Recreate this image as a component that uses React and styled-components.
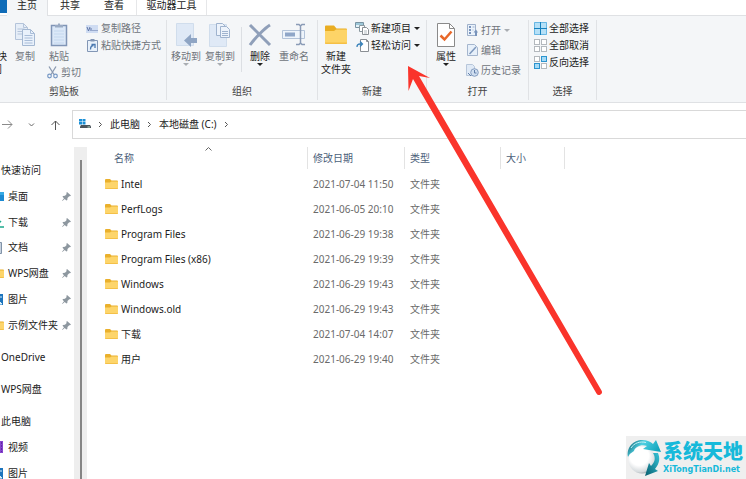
import React from "react";
import styled, { createGlobalStyle, css } from "styled-components";

const Global = createGlobalStyle`
  *, *::before, *::after { box-sizing: border-box; }
  body { margin: 0; background: #fff; }
  button, a, table { font: inherit; color: inherit; }
  button { border: 0; padding: 0; margin: 0; background: none; }
  a { text-decoration: none; }
  ul, ol { list-style: none; margin: 0; padding: 0; }
  svg { display: block; flex: none; }
`;

const Window = styled.div`
  position: relative;
  display: flex;
  flex-direction: column;
  height: 100vh;
  overflow: hidden;
  background: #fff;
  color: #222;
  font: 10px/13px "Noto Sans", "Noto Sans CJK SC", sans-serif;
  white-space: nowrap;
`;

/* ---------- tabs ---------- */
const TabStrip = styled.nav`
  display: flex;
  align-items: flex-start;
  flex: none;
  height: 15px;
  line-height: 10px;
`;
const FileTab = styled.button`
  width: 7px;
  height: 13px;
  background: #0f6cb8;
`;
const Tab = styled.button`
  width: 44px;
  height: 15px;
  padding-bottom: 5px;
  ${(p) => p.$active && css`
    width: 41px;
    height: 16px;
    padding-bottom: 6px;
    position: relative;
    background: #f4f6f8;
    border-right: 1px solid #dfe1e4;
  `}
  ${(p) => p.$context && css`
    width: 71px;
    border: solid #e6e7e9;
    border-width: 0 1px;
  `}
`;

/* ---------- ribbon ---------- */
const Ribbon = styled.div`
  display: flex;
  flex: none;
  height: 88px;
  padding: 4px 0 2px;
  background: #f4f6f8;
  border: solid #dfe1e4;
  border-width: 1px 0;
`;
const Group = styled.section`
  display: flex;
  flex-direction: column;
  flex: none;
  width: ${(p) => p.$width}px;
  margin-left: ${(p) => (p.$clipped ? -38 : 0)}px;
  border-right: 1px solid #e0e2e5;
`;
const GroupBody = styled.div`
  display: flex;
  align-items: flex-start;
  height: 64px;
  padding-left: ${(p) => p.$inset}px;
`;
const GroupName = styled.div`
  height: 17px;
  line-height: 17px;
  text-align: center;
  color: #444;
`;
const BigButton = styled.button`
  display: flex;
  flex-direction: column;
  align-items: center;
  flex: none;
  width: ${(p) => (p.$wide ? 42 : 34)}px;
  color: ${(p) => (p.disabled ? "#6f747b" : "#222")};
`;
const BigIcon = styled.span`
  display: flex;
  align-items: center;
  justify-content: center;
  height: 30px;
`;
const Stack = styled.div`
  display: flex;
  flex-direction: column;
  align-items: flex-start;
  margin-left: ${(p) => p.$gap || 0}px;
`;
const PasteStack = styled(Stack)`
  width: 38px;
  & > :last-child { margin: 1px 0 0 3px; }
`;
const SmallButton = styled.button`
  display: flex;
  align-items: center;
  gap: 2px;
  height: ${(p) => (p.$tall ? 20 : 17)}px;
  color: ${(p) => (p.disabled ? "#6f747b" : "#222")};
`;
const SmallIcon = styled.span`
  display: flex;
  justify-content: center;
  width: 14px;
`;
const Caret = styled.span`
  flex: none;
  width: 0;
  height: 0;
  margin-left: ${(p) => (p.$inline ? 1 : 0)}px;
  border: solid transparent;
  border-width: 3px 3px 0;
  border-top-color: ${(p) => (p.$dim ? "#a9adb2" : "#222")};
`;
const Separator = styled.div`
  width: 1px;
  height: 45px;
  margin: 7px 1px 0 4px;
  background: #dcdfe3;
`;

/* ---------- address bar ---------- */
const NavBar = styled.div`
  display: flex;
  flex: none;
  align-items: center;
  padding-top: 7px;
`;
const NavButtons = styled.div`
  display: flex;
  align-items: center;
  flex: none;
  width: 72px;
`;
const NavButton = styled.button`
  display: flex;
  align-items: center;
  justify-content: center;
  width: ${(p) => (p.$edge ? 19 : 24)}px;
  padding-right: ${(p) => (p.$edge ? 5 : 0)}px;
  height: 24px;
`;
const Address = styled.ol`
  display: flex;
  flex: 1;
  align-items: center;
  height: 29px;
  padding-left: 6px;
  border: solid #d9d9d9;
  border-width: 1px 0 1px 1px;
`;
const Crumb = styled.li`
  display: flex;
  align-items: center;
  gap: 7px;
  margin-right: 7px;
`;

/* ---------- content ---------- */
const Content = styled.main`
  display: flex;
  flex: 1;
  min-height: 0;
`;
const Sidebar = styled.nav`
  flex: none;
  width: 74px;
  padding-top: 19px;
  overflow: hidden;
`;
const QuickList = styled.ul`
  display: grid;
  grid-template-rows: repeat(7, 1fr);
  height: 180px;
`;
const SideItem = styled.li`
  display: flex;
  align-items: center;
  min-height: ${(p) => (p.$root ? 26 : 0)}px;
  margin-top: ${(p) => (p.$root ? 6 : 0)}px;
  padding: 0 3px 0 1px;
  ${(p) => p.$child && css`
    height: ${p.$fixed ? "26px" : "auto"};
    padding-left: 0;
    margin-left: -9px;
  `}
`;
const SideLink = styled.a`
  display: flex;
  align-items: center;
  flex: 1;
  gap: 4px;
  color: #1c1c1c;
`;
const ScrollTrack = styled.div`
  flex: none;
  width: 13px;
  margin-top: 8px;
  padding: 13px 0 0 6px;
  background: #eeeeee;
`;
const ScrollThumb = styled.div`
  width: 2px;
  height: 100%;
  background: #858585;
`;
const Files = styled.table`
  align-self: flex-start;
  flex: none;
  table-layout: fixed;
  width: 478px;
  margin-top: 8px;
  border-collapse: collapse;
  td { height: 25px; padding: 0 0 0 5px; color: #6a6a6a; }
`;
const HeadCell = styled.th`
  position: relative;
  width: ${(p) => p.$width}px;
  height: 25px;
  padding: 0;
  vertical-align: top;
  font-weight: 400;
  text-align: left;
  color: #4c607a;
`;
const HeadLabel = styled.div`
  height: 22px;
  line-height: 22px;
  padding-left: ${(p) => (p.$first ? 27 : 5)}px;
  border-right: 1px solid #e3e3e3;
`;
const SortMark = styled.span`
  position: absolute;
  top: 0;
  right: 96px;
`;
const FileName = styled.a`
  display: flex;
  align-items: center;
  gap: 3px;
  padding-left: 13px;
  color: #1c1c1c;
`;

/* ---------- overlays ---------- */
const Pointer = styled.svg`
  position: absolute;
  top: 64px;
  left: 406px;
  pointer-events: none;
`;
const Badge = styled.aside`
  position: absolute;
  right: 0;
  bottom: 0;
  display: flex;
  align-items: center;
  width: 120px;
  height: 43px;
  gap: 1px;
  background: #efefef;
  color: #16b9da;
`;
const BadgeTitle = styled.div`
  font: 900 20px/24px "Noto Sans CJK SC", sans-serif;
`;
const BadgeSite = styled.div`
  font: 700 8px/13px "DejaVu Sans", sans-serif;
`;

/* ---------- icons ---------- */
const S = ({ w, h, children, ...rest }) => (
  <svg width={w} height={h} viewBox={`0 0 ${w} ${h}`} fill="none" aria-hidden="true" {...rest}>
    {children}
  </svg>
);

const CopyIcon = () => (
  <S w={21} h={24}>
    <path d="M.5.5h8l4 4v12H.5z" fill="#e6eef8" stroke="#b4c4da" />
    <path d="M8.5.5v4h4M2.500 6h7M2.500 8.500h7M2.500 11h7" stroke="#b4c4da" />
    <path d="M7.500 6.500h8l4 4v12h-12z" fill="#e9f1fb" stroke="#a4b8d2" />
    <path d="M15.500 6.500v4h4M9.500 12.500h8M9.500 15h8M9.500 17.500h8M9.500 20h8" stroke="#a9bdd8" />
  </S>
);
const PasteIcon = () => (
  <S w={18} h={24}>
    <rect x="1.500" y="2.500" width="15" height="20" fill="#dbe8f8" stroke="#8095b6" strokeWidth="1.500" />
    <path d="M5 4.500V2h3V.5h2V2h3v2.500z" fill="#9aabc4" />
    <path d="M4 8h10M4 11h10M4 14h10M4 17h10M4 20h10" stroke="#c4d7ee" />
  </S>
);
const MoveIcon = () => (
  <S w={23} h={24}>
    <path d="M1.500.5h17v22h-17z" fill="#dfe9f6" stroke="#d0ddec" />
    <path d="M9 17.500l7-6.500v4h6v5h-6v4z" fill="#8fa5c4" />
  </S>
);
const CopyToIcon = () => (
  <S w={22} h={24}>
    <path d="M.5 1.500h17v22H.5z" fill="#dfe9f6" stroke="#d0ddec" />
    <path d="M7.500.5h6l3 3v9h-9z" fill="#edf3fb" stroke="#9fb3ce" />
    <path d="M11.500 3.500h6l3 3v8h-9z" fill="#edf3fb" stroke="#9fb3ce" />
    <path d="M13 8.500h6M13 10.500h6M13 12.500h6" stroke="#9fb3ce" />
  </S>
);
const DeleteIcon = () => (
  <S w={24} h={24}>
    <path d="M2 2c4 4 12 12 20 20M22 2C17 5 7 15 2 22" stroke="#8f9fb9" strokeWidth="3" />
  </S>
);
const RenameIcon = () => (
  <S w={24} h={24}>
    <path d="M.5 7.500h22v8H.5z" fill="#eef4fb" stroke="#b3c3d9" />
    <path d="M3 9.500h10v4H3z" fill="#8fa6c8" />
    <path d="M14 1.500h3l1.500 1.500L20 1.500h3M14 21.500h3l1.500-1.500 1.500 1.500h3M18.500 3v17" stroke="#8a9bb6" strokeWidth="1.500" />
  </S>
);
const NewFolderIcon = () => (
  <S w={24} h={22}>
    <path d="M1 2.500Q1 1.500 2 1.500h8l2.500 3H22q1 0 1 1V11H1z" fill="#e9ad22" />
    <path d="M1 7h9l2-1.500h11V19q0 1-1 1H2q-1 0-1-1z" fill="#fdd467" />
    <path d="M1 18.500h22V19q0 1-1 1H2q-1 0-1-1z" fill="#f5bf45" />
  </S>
);
const PropertiesIcon = () => (
  <S w={18} h={24}>
    <path d="M.5.5h12l5 5v18H.5z" fill="#fff" stroke="#8a8a8a" />
    <path d="M12.500.5v5h5" stroke="#8a8a8a" />
    <path d="M3.500 12.500l4 4 7-8" stroke="#e8682a" strokeWidth="2.500" />
  </S>
);
const PathIcon = () => (
  <S w={12} h={8}>
    <path d="M0 0h12v8H0z" fill="#cfdcf2" />
    <path d="M1 2l1.500 4L4 2M5 3v3M6.500 5.500h1M8.500 5.500h1M10.500 5.500h1" stroke="#6077a8" />
  </S>
);
const ShortcutIcon = () => (
  <S w={11} h={13}>
    <path d="M.5 1.500h10v11H.5z" fill="#e8f1fb" stroke="#8296b5" />
    <path d="M3.500 0h4v2.500h-4z" fill="#8296b5" />
    <path d="M3.500 10.500q0-4 3-4M4.500 5.500h3.500V9" stroke="#4978b0" strokeWidth="1.300" />
  </S>
);
const CutIcon = () => (
  <S w={11} h={13}>
    <path d="M2 .5l5 8M9 .5l-5 8" stroke="#8a99b0" strokeWidth="1.300" />
    <circle cx="2.500" cy="10" r="1.800" stroke="#7597c4" strokeWidth="1.200" />
    <circle cx="8.500" cy="10" r="1.800" stroke="#7597c4" strokeWidth="1.200" />
  </S>
);
const NewItemIcon = () => (
  <S w={14} h={13}>
    <path d="M.5.5h8v5h-8z" fill="#e4f2f8" stroke="#7893a2" />
    <path d="M1 2h7" stroke="#579cb8" />
    <path d="M4.500 3.500h5v6h-5z" fill="#fff" stroke="#8a989f" />
    <path d="M7.500 5.500h4l2 2v5h-6z" fill="#fff" stroke="#8a8f94" />
    <path d="M9 9h3M9 11h3" stroke="#b3bcc2" />
  </S>
);
const AccessIcon = () => (
  <S w={13} h={13}>
    <path d="M4.500.5h6l2 2v10h-8z" fill="#fff" stroke="#8a8f94" />
    <path d="M10.500.5v2h2" stroke="#8a8f94" />
    <path d="M1 8q0-3 3-3h2M4 2.500L6.500 5 4 7.500" stroke="#3a83bb" strokeWidth="1.300" />
  </S>
);
const OpenIcon = () => (
  <S w={11} h={12}>
    <path d="M.5.5h8v11h-8z" fill="#eaf2fb" stroke="#9fb1cb" />
    <path d="M2 2h2v2H2zM2 5h2v2H2zM2 8h2v2H2z" fill="#7893bb" />
    <path d="M5.500 3h2M5.500 6h1" stroke="#9fb1cb" />
    <path d="M8 12V8.500H6.500L9 5.500l2 3h-1V12z" fill="#7893bb" />
  </S>
);
const EditIcon = () => (
  <S w={11} h={12}>
    <path d="M.5.5h7l3 3v8H.5z" fill="#e7f0fa" stroke="#a5b6ce" />
    <path d="M2.500 10L9 3" stroke="#7e98bd" strokeWidth="1.500" />
  </S>
);
const HistoryIcon = () => (
  <S w={13} h={13}>
    <path d="M.5.5h6l2 2v9h-8z" fill="#e0eaf6" stroke="#b7c6da" />
    <circle cx="8.500" cy="8.500" r="3.800" fill="#cfdef0" stroke="#859dbf" />
    <path d="M8.500 6v3h2M2 9l3 3" stroke="#617fa9" />
  </S>
);
const tiles = [[0, 0], [7, 0], [0, 7], [7, 7]];
const SelectIcon = ({ on }) => (
  <S w={13} h={13}>
    {tiles.map(([x, y], i) => {
      const active = on.includes(i);
      return (
        <rect key={i} x={x + 0.5} y={y + 0.5} width="5" height="5"
          fill={active ? "#a5daf6" : "#fff"} stroke={active ? "#2b94cf" : "#b3b8bd"} />
      );
    })}
  </S>
);
const SelectAllIcon = () => (
  <S w={13} h={13}>
    <path d="M0 0h13v13H0z" fill="#b5e0f7" />
    <path d="M.5.5h12v12H.5z" stroke="#69b7e3" />
    <path d="M6.500 0v13M0 6.500h13" stroke="#1681bd" />
  </S>
);
const Folder = () => (
  <S w={13} h={11}>
    <path d="M0 1q0-1 1-1h4l1.500 1.500H12q1 0 1 1V6H0z" fill="#eab02c" />
    <path d="M0 3.500h5L6.500 2.500H13V9q0 1-1 1H1q-1 0-1-1z" fill="#fdd56b" />
    <path d="M0 9h13q0 1-1 1H1q-1 0-1-1z" fill="#f4c048" />
  </S>
);
const Chevron = () => (
  <S w={5} h={7}><path d="M1 1l2.500 2.500L1 6" stroke="#555" /></S>
);
const DriveIcon = () => (
  <S w={12} h={11}>
    <path d="M0 0h3v2.500H0zM3.500 0h3v2.500h-3zM0 3h3v2.500H0zM3.500 3h3v2.500h-3z" fill="#1b8fd6" />
    <path d="M2 6h9l1 1.500V9H1V7.500z" fill="#4b545b" />
    <path d="M8.500 8h2.500" stroke="#b8d8c2" />
  </S>
);
const PinIcon = () => (
  <S w={9} h={9}>
    <path d="M5 0l4 3.500-1 .8-.8-.1L5.500 6l-.2 2-1 .5L2.800 7 .3 9 0 8.700l2-2.500L.5 4.700 1 4l2-.3L4.700 2 4.300 1z" fill="#8d979f" />
  </S>
);
const Desktop = () => (
  <S w={13} h={11}>
    <path d="M0 1h13v9H0z" fill="#1c8ad2" /><path d="M0 1h13v3H0z" fill="#36a9e4" />
  </S>
);
const Download = () => (
  <S w={13} h={12}>
    <path d="M6.500 0v8M3 5l3.500 3.500L10 5M1 11h12" stroke="#1ca88c" strokeWidth="1.500" />
  </S>
);
const Document = () => (
  <S w={11} h={12}>
    <path d="M.5.5h8v11h-8z" fill="#c7d2df" stroke="#8193a8" /><path d="M2 4h5M2 7h5" stroke="#fff" />
  </S>
);
const Picture = () => (
  <S w={12} h={11}>
    <path d="M0 0h11v11H0z" fill="#1c74bd" /><path d="M0 10l5-5 5 5zM8 3h2" fill="#d9effb" stroke="#d9effb" />
  </S>
);
const Video = () => (
  <S w={12} h={12}>
    <path d="M0 0h11v12H0z" fill="#8744cf" /><path d="M9.500 1v10" stroke="#5f2aa3" strokeDasharray="2 1" />
  </S>
);
const GlobeLogo = () => (
  <S w={36} h={41}>
    <defs>
      <radialGradient id="ball" cx=".4" cy=".35" r=".7">
        <stop offset=".5" stopColor="#fff" /><stop offset=".85" stopColor="#d5dadd" /><stop offset="1" stopColor="#8c989d" />
      </radialGradient>
      <linearGradient id="swoosh" x1="0" y1="0" x2="1" y2=".4">
        <stop stopColor="#0a5563" /><stop offset=".45" stopColor="#4fd0e2" /><stop offset="1" stopColor="#12a5bd" />
      </linearGradient>
      <linearGradient id="band" x1="1" y1="0" x2="0" y2="1">
        <stop stopColor="#35c3d8" /><stop offset="1" stopColor="#075e6e" />
      </linearGradient>
    </defs>
    <circle cx="16" cy="23" r="13.500" fill="url(#ball)" />
    <path d="M2 20C0 10 8 3 16 3c5 0 9 2 11 4l3-4 5 12-18-3 4-3C15 7 9 10 8 14q-4 2-6 6z" fill="url(#swoosh)" />
    <path d="M27 16c3 5 2 9-2 13l-2-3-4 13 13-5-3-2c5-6 5-11 3-16z" fill="url(#band)" />
    <path d="M5 11C8 6 14 4 20 5.500" stroke="#c6f3f9" />
  </S>
);

/* ---------- composed parts ---------- */
const Big = ({ icon, lines, caret, disabled, wide }) => (
  <BigButton disabled={disabled} $wide={wide}>
    <BigIcon>{icon}</BigIcon>
    {lines.map((t) => <span key={t}>{t}</span>)}
    {caret && <Caret $dim={disabled} />}
  </BigButton>
);
const Small = ({ icon, label, caret, disabled, tall }) => (
  <SmallButton disabled={disabled} $tall={tall}>
    <SmallIcon>{icon}</SmallIcon>
    <span>{label}</span>
    {caret && <Caret $inline $dim={disabled} />}
  </SmallButton>
);
const RibbonGroup = ({ name, width, inset, clipped, children }) => (
  <Group $width={width} $clipped={clipped} aria-label={name}>
    <GroupBody $inset={inset}>{children}</GroupBody>
    <GroupName>{name}</GroupName>
  </Group>
);

const quickAccess = [
  ["桌面", Desktop], ["下载", Download], ["文档", Document],
  ["WPS网盘", Folder], ["图片", Picture], ["示例文件夹", Folder],
];
const files = [
  ["Intel", "2021-07-04 11:50"],
  ["PerfLogs", "2021-06-05 20:10"],
  ["Program Files", "2021-06-29 19:38"],
  ["Program Files (x86)", "2021-06-29 19:39"],
  ["Windows", "2021-06-29 19:43"],
  ["Windows.old", "2021-06-29 19:43"],
  ["下载", "2021-07-04 14:07"],
  ["用户", "2021-06-29 19:40"],
];
const ChildIcon = styled.span`
  display: flex;
  justify-content: flex-end;
  width: 13px;
`;

export default function App() {
  return (
    <Window lang="zh-CN">
      <Global />
      <TabStrip>
        <FileTab aria-label="文件" />
        <Tab $active>主页</Tab>
        <Tab>共享</Tab>
        <Tab>查看</Tab>
        <Tab $context>驱动器工具</Tab>
      </TabStrip>

      <Ribbon>
        <RibbonGroup name="剪贴板" width={205} inset={4} clipped>
          <Big wide lines={["固定到快", "速访问"]} />
          <Big icon={<CopyIcon />} lines={["复制"]} disabled />
          <PasteStack>
            <Big icon={<PasteIcon />} lines={["粘贴"]} disabled />
            <Small icon={<CutIcon />} label="剪切" disabled />
          </PasteStack>
          <Stack $gap={5}>
            <Small icon={<PathIcon />} label="复制路径" disabled />
            <Small icon={<ShortcutIcon />} label="粘贴快捷方式" disabled />
          </Stack>
        </RibbonGroup>
        <RibbonGroup name="组织" width={151} inset={2}>
          <Big icon={<MoveIcon />} lines={["移动到"]} caret disabled />
          <Big icon={<CopyToIcon />} lines={["复制到"]} caret disabled />
          <Separator />
          <Big icon={<DeleteIcon />} lines={["删除"]} caret />
          <Big icon={<RenameIcon />} lines={["重命名"]} disabled />
        </RibbonGroup>
        <RibbonGroup name="新建" width={109} inset={1}>
          <Big icon={<NewFolderIcon />} lines={["新建", "文件夹"]} />
          <Stack $gap={2}>
            <Small icon={<NewItemIcon />} label="新建项目" caret />
            <Small icon={<AccessIcon />} label="轻松访问" caret />
          </Stack>
        </RibbonGroup>
        <RibbonGroup name="打开" width={102} inset={2}>
          <Big icon={<PropertiesIcon />} lines={["属性"]} caret />
          <Stack $gap={2}>
            <Small tall icon={<OpenIcon />} label="打开" caret disabled />
            <Small tall icon={<EditIcon />} label="编辑" disabled />
            <Small tall icon={<HistoryIcon />} label="历史记录" disabled />
          </Stack>
        </RibbonGroup>
        <RibbonGroup name="选择" width={68} inset={4}>
          <Stack>
            <Small icon={<SelectAllIcon />} label="全部选择" />
            <Small icon={<SelectIcon on={[]} />} label="全部取消" />
            <Small icon={<SelectIcon on={[1, 2]} />} label="反向选择" />
          </Stack>
        </RibbonGroup>
      </Ribbon>

      <NavBar>
        <NavButtons>
          <NavButton $edge aria-label="前进">
            <S w={11} h={9}><path d="M0 4.500h10M6 .5l4 4-4 4" stroke="#8a8a8a" /></S>
          </NavButton>
          <NavButton aria-label="最近位置">
            <S w={7} h={4}><path d="M1 .5l2.500 2.500L6 .5" stroke="#666" /></S>
          </NavButton>
          <NavButton aria-label="上移">
            <S w={9} h={10}><path d="M4.500 10V1M.5 5l4-4 4 4" stroke="#555" /></S>
          </NavButton>
        </NavButtons>
        <Address>
          <Crumb><DriveIcon /><Chevron /></Crumb>
          <Crumb><a href="#pc">此电脑</a><Chevron /></Crumb>
          <Crumb><a href="#c">本地磁盘 (C:)</a><Chevron /></Crumb>
        </Address>
      </NavBar>

      <Content>
        <Sidebar>
          <QuickList>
            <SideItem><SideLink href="#quick">快速访问</SideLink></SideItem>
            {quickAccess.map(([name, Icon]) => (
              <SideItem key={name} $child>
                <SideLink href="#folder"><ChildIcon><Icon /></ChildIcon>{name}</SideLink>
                <PinIcon />
              </SideItem>
            ))}
          </QuickList>
          <ul>
            <SideItem $root><SideLink href="#onedrive">OneDrive</SideLink></SideItem>
            <SideItem $root><SideLink href="#wps">WPS网盘</SideLink></SideItem>
            <SideItem $root><SideLink href="#pc">此电脑</SideLink></SideItem>
            <SideItem $child $fixed>
              <SideLink href="#video"><ChildIcon><Video /></ChildIcon>视频</SideLink>
            </SideItem>
            <SideItem $child $fixed>
              <SideLink href="#pictures"><ChildIcon><Picture /></ChildIcon>图片</SideLink>
            </SideItem>
          </ul>
        </Sidebar>
        <ScrollTrack><ScrollThumb /></ScrollTrack>
        <Files>
          <thead>
            <tr>
              <HeadCell $width={221}>
                <HeadLabel $first>名称</HeadLabel>
                <SortMark><S w={7} h={4}><path d="M.5 3.500l3-3 3 3" stroke="#666" /></S></SortMark>
              </HeadCell>
              <HeadCell $width={97}><HeadLabel>修改日期</HeadLabel></HeadCell>
              <HeadCell $width={96}><HeadLabel>类型</HeadLabel></HeadCell>
              <HeadCell $width={64}><HeadLabel>大小</HeadLabel></HeadCell>
            </tr>
          </thead>
          <tbody>
            {files.map(([name, date]) => (
              <tr key={name}>
                <td><FileName href="#open"><Folder />{name}</FileName></td>
                <td>{date}</td>
                <td>文件夹</td>
                <td />
              </tr>
            ))}
          </tbody>
        </Files>
      </Content>

      <Pointer width="200" height="334" viewBox="406 64 200 334" aria-hidden="true">
        <path d="M408 66l22 12-11-2 182.500 314.500a2.800 2.800 0 0 1-5 3L413 79l-4.500 12z" fill="#fa342b" />
      </Pointer>

      <Badge>
        <GlobeLogo />
        <div>
          <BadgeTitle>系统天地</BadgeTitle>
          <BadgeSite>XiTongTianDi.net</BadgeSite>
        </div>
      </Badge>
    </Window>
  );
}
